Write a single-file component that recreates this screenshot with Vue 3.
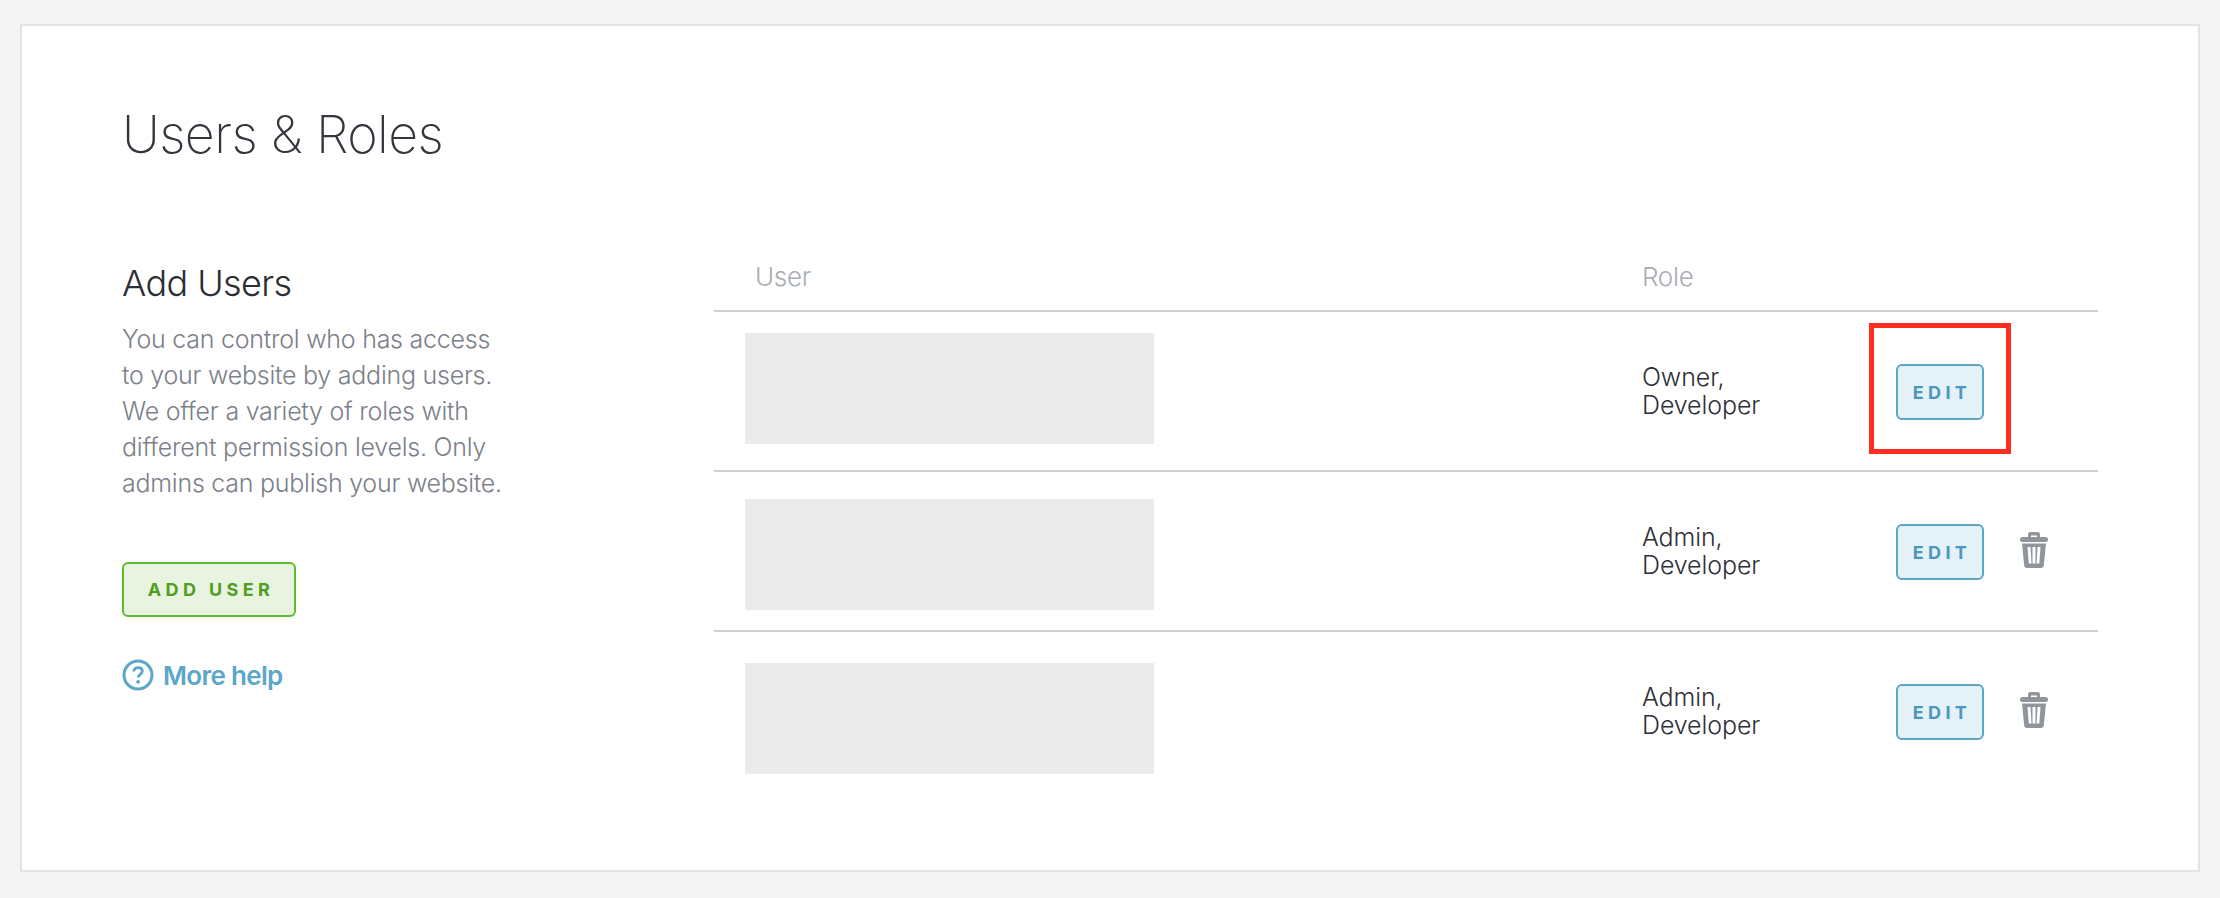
<template>
  <div class="page">
    <div class="card">
      <h1 class="title">Users &amp; Roles</h1>
      <div class="content">
        <aside class="side">
          <h2 class="side-title">Add Users</h2>
          <p class="side-text">
            You can control who has access<br />
            to your website by adding users.<br />
            We offer a variety of roles with<br />
            different permission levels. Only<br />
            admins can publish your website.
          </p>
          <button class="btn btn-green">ADD USER</button>
          <a class="help">
            <svg class="help-icon" viewBox="0 0 32 32">
              <circle cx="16" cy="16" r="14" fill="none" stroke="currentColor" stroke-width="3" />
              <path d="M11.8 12.6c0-2.500 1.900-4 4.300-4s4.200 1.400 4.200 3.600c0 3-4.200 3.200-4.200 6.300" fill="none" stroke="currentColor" stroke-width="2.800" />
              <circle cx="16.100" cy="22.800" r="1.900" fill="currentColor" />
            </svg>
            More help
          </a>
        </aside>
        <section class="table">
          <div class="head">
            <span class="head-user">User</span>
            <span>Role</span>
          </div>
          <div v-for="(u, i) in users" :key="i" class="row">
            <div class="cell-user" :class="'cell-user-' + i">
              <div class="redacted"></div>
            </div>
            <div class="role">{{ u.role }},<br />Developer</div>
            <div class="actions">
              <button class="btn btn-blue">EDIT</button>
              <svg v-if="u.removable" class="trash" viewBox="0 0 28 36">
                <path d="M8 6V2.500C8 1.100 9 0 10.500 0h7C19 0 20 1.100 20 2.500V6h-3V3.500h-6V6z" fill="currentColor" />
                <rect x="0" y="5" width="28" height="5" rx="2.500" fill="currentColor" />
                <path fill-rule="evenodd" d="M2 11.500h24l-2.200 22c-.2 1.500-1.200 2.500-2.800 2.500H7c-1.600 0-2.600-1-2.800-2.500zM7.500 15l1.300 16.500h2.700L10.600 15zm5 0v16.500h3V15zm5 0l-.9 16.500h2.700L20.500 15z" fill="currentColor" />
              </svg>
              <div v-if="i === 0" class="highlight"></div>
            </div>
          </div>
        </section>
      </div>
    </div>
  </div>
</template>

<script setup>
const users = [
  { role: 'Owner', removable: false },
  { role: 'Admin', removable: true },
  { role: 'Admin', removable: true }
]
</script>

<style scoped>
.page {
  box-sizing: border-box;
  width: 2220px;
  height: 898px;
  padding: 24px 20px 26px;
  background: #f4f4f4;
  font-family: "Inter", "Liberation Sans", sans-serif;
}
.card {
  box-sizing: border-box;
  height: 848px;
  padding: 79px 100px 0 100px;
  background: #fff;
  border: 2px solid #e4e4e4;
}
.title {
  margin: 0;
  font-size: 52px;
  line-height: 60px;
  font-weight: 200;
  color: #33363d;
  letter-spacing: -0.6px;
}
.content {
  display: flex;
  margin-top: 94px;
}
.side {
  width: 592px;
  flex: none;
  padding-top: 2px;
}
.side-title {
  margin: 0;
  font-size: 36px;
  line-height: 44px;
  font-weight: 300;
  color: #2b2e35;
  letter-spacing: -0.6px;
}
.side-text {
  margin: 16px 0 0;
  font-size: 25px;
  line-height: 36px;
  font-weight: 300;
  color: #7b8089;
  letter-spacing: -0.25px;
}
.btn {
  display: block;
  box-sizing: border-box;
  border-radius: 6px;
  border: 2px solid;
  font-family: inherit;
  font-size: 18px;
  font-weight: 700;
  letter-spacing: 4.4px;
  padding: 0 0 0 4px;
}
.btn-green {
  width: 174px;
  height: 55px;
  margin-top: 61px;
  background: #e8f4df;
  border-color: #5fbb2f;
  color: #4f9e1f;
}
.btn-blue {
  width: 88px;
  height: 56px;
  background: #e4f1f6;
  border-color: #5ba6c9;
  color: #4a98bd;
}
.help {
  display: flex;
  align-items: center;
  gap: 9px;
  margin-top: 42px;
  font-size: 26px;
  font-weight: 600;
  color: #5ba6c9;
  letter-spacing: -0.7px;
}
.help-icon {
  width: 32px;
  height: 32px;
}
.table {
  flex: 1;
}
.head {
  display: grid;
  grid-template-columns: 928px 1fr;
  height: 51px;
  border-bottom: 2px solid #ccd0d3;
  font-size: 26px;
  font-weight: 300;
  line-height: 36px;
  color: #a9adb3;
  letter-spacing: -0.3px;
}
.head-user {
  padding-left: 41px;
}
.row {
  display: grid;
  box-sizing: border-box;
  grid-template-columns: 928px 254px 1fr;
  height: 160px;
  padding-top: 2px;
  align-items: center;
  border-bottom: 2px solid #ccd0d3;
}
.row:last-child {
  height: 158px;
  border-bottom: 0;
}
.cell-user {
  align-self: start;
  padding: 19px 0 0 31px;
}
.cell-user-1 {
  padding-top: 25px;
}
.cell-user-2 {
  padding-top: 29px;
}
.redacted {
  width: 409px;
  height: 111px;
  background: #ebebeb;
}
.role {
  margin-top: -2px;
  font-size: 25px;
  line-height: 28px;
  font-weight: 300;
  color: #2d3036;
  letter-spacing: -0.1px;
}
.actions {
  position: relative;
  display: flex;
  align-items: center;
  gap: 36px;
}
.trash {
  width: 28px;
  height: 36px;
  margin-top: -4px;
  color: #90949b;
}
.highlight {
  position: absolute;
  left: -27px;
  top: -41px;
  box-sizing: border-box;
  width: 142px;
  height: 131px;
  border: 5px solid #ff2d20;
}
</style>

<style>
html, body {
  margin: 0;
  background: #f4f4f4;
}
</style>
